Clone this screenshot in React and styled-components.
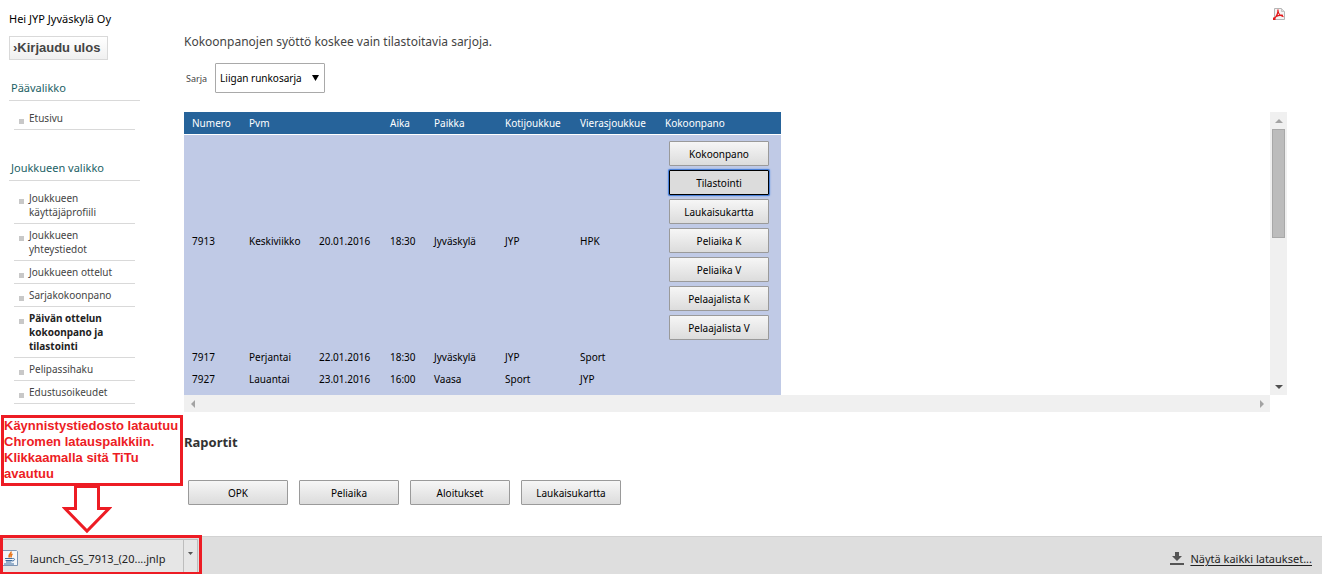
import React from "react";
import styled, { createGlobalStyle } from "styled-components";

const GlobalStyle = createGlobalStyle`
  *, *::before, *::after { box-sizing: border-box; }
  body {
    margin: 0;
    background: #fff;
    color: #000;
    font-family: "Noto Sans", "Open Sans", sans-serif;
    font-size: 10px;
  }
  button, select { font-family: inherit; }
`;

const Page = styled.div`
  display: flex;
  flex-direction: column;
  min-height: 100vh;
`;

const Columns = styled.div`
  display: flex;
  flex: 1;
`;

const Sidebar = styled.aside`
  flex: none;
  width: 184px;
  padding: 11px 44px 0 9px;
`;

const Greeting = styled.p`
  margin: 0 0 9px;
  font-size: 11px;
  line-height: 16px;
  white-space: nowrap;
`;

const LogoutButton = styled.button`
  display: block;
  height: 24px;
  padding: 0 7px 2px 3px;
  border: 1px solid #d9d9d9;
  background: linear-gradient(#fff, #f0f0f0);
  color: #444;
  font: bold 13px "Liberation Sans", sans-serif;
  white-space: nowrap;
`;

const MenuSection = styled.nav`
  margin-top: ${(p) => (p.$first ? 20 : 30)}px;
`;

const MenuTitle = styled.h2`
  margin: 0 0 6px;
  padding: 0 2px 4px;
  border-bottom: 1px solid #d9d9d9;
  color: #1c5f66;
  font-size: 11px;
  font-weight: 400;
  line-height: 16px;
`;

const MenuList = styled.ul`
  margin: 0;
  padding: 0 5px;
  list-style: none;
`;

const MenuItem = styled.li`
  display: flex;
  align-items: flex-start;
  gap: 5px;
  padding: 4px 5px;
  border-bottom: 1px solid #d9d9d9;

  &::before {
    content: "";
    flex: none;
    width: 5px;
    height: 5px;
    margin-top: 8px;
    background: #c8c8c8;
  }
`;

const MenuLink = styled.a`
  color: ${(p) => (p.$active ? "#222" : "#444")};
  font-weight: ${(p) => (p.$active ? 700 : 400)};
  line-height: 14px;
  text-decoration: none;
`;

const Main = styled.main`
  flex: 1;
  min-width: 0;
  padding: 8px 35px 0 0;
`;

const Tools = styled.div`
  display: flex;
  justify-content: flex-end;
  padding: 0 2px;
`;

const PdfLink = styled.a`
  display: block;
  height: 12px;
  svg { display: block; }
`;

const Intro = styled.p`
  margin: 12px 0 11px;
  color: #444;
  font-size: 12px;
  line-height: 20px;
`;

const SeriesRow = styled.div`
  display: flex;
  align-items: center;
  gap: 8px;
  margin-bottom: 19px;
  padding-left: 2px;
`;

const SeriesLabel = styled.label`
  color: #444;
  font-size: 9px;
`;

const SelectWrap = styled.div`
  position: relative;

  svg {
    position: absolute;
    right: 6px;
    top: 12px;
    pointer-events: none;
  }
`;

const SeriesSelect = styled.select`
  display: block;
  appearance: none;
  width: 110px;
  height: 30px;
  padding: 0 4px;
  border: 1px solid #a9a9a9;
  border-radius: 1px;
  background: #fff;
  color: #000;
  font-size: 10px;
`;

const ScrollFrame = styled.div`
  display: grid;
  grid-template-columns: 1fr 17px;
  grid-template-rows: 283px 17px;
`;

const ScrollView = styled.div`
  overflow: hidden;
`;

const ScrollTrack = styled.div`
  display: flex;
  flex-direction: ${(p) => (p.$vertical ? "column" : "row")};
  align-items: center;
  justify-content: space-between;
  background: #f0f0f0;
`;

const ScrollArrow = styled.button`
  display: grid;
  place-items: center;
  flex: none;
  width: 17px;
  height: 17px;
  padding: 0;
  border: 0;
  background: none;
`;

const ScrollThumb = styled.div`
  width: 13px;
  height: 109px;
  margin-bottom: auto;
  border: 1px solid #a8a8a8;
  background: #bcbcbc;
`;

const GameTable = styled.table`
  width: 597px;
  table-layout: fixed;
  border-collapse: separate;
  border-spacing: 0;
`;

const HeadCell = styled.th`
  height: 23px;
  padding: 0 8px;
  border-bottom: 1px solid #fff;
  background: #26639a;
  color: #fff;
  font-weight: 400;
  line-height: 14px;
  text-align: left;
  white-space: nowrap;
`;

const Cell = styled.td`
  height: 22px;
  padding: 0 8px;
  background: #c0cae6;
  line-height: 14px;
  white-space: nowrap;
`;

const ButtonStack = styled.div`
  display: flex;
  flex-direction: column;
  gap: 4px;
  padding: 6px 4px;
`;

const ActionButton = styled.button`
  width: 100px;
  height: 25px;
  padding: 0;
  border: 1px solid #9a9a9a;
  border-radius: 1px;
  background: linear-gradient(#f6f6f6, #dcdcdc);
  color: #000;
  font-size: 10px;
  line-height: 14px;

  &[aria-pressed="true"] {
    border-color: #000;
    background: #dcdcdc;
    box-shadow: 0 0 0 1px #4a80d8, 0 0 2px 1px #6f9de8;
  }
`;

const ReportTitle = styled.h2`
  margin: 20px 0 28px;
  color: #333;
  font-size: 13px;
  font-weight: 700;
  line-height: 20px;
`;

const ReportRow = styled.div`
  display: flex;
  gap: 11px;
  padding: 0 4px 31px;
`;

const DownloadBar = styled.footer`
  position: relative;
  display: flex;
  align-items: center;
  justify-content: space-between;
  flex: none;
  height: 38px;
  padding-right: 10px;
  border-top: 1px solid #d2d2d2;
  background: #dedede;
  color: #222;
  font-size: 11px;
`;

const DownloadItem = styled.div`
  display: flex;
  align-self: stretch;
  margin-top: 2px;
  border-top: 1px solid #bdbdbd;
  background: #e6e6e6;
`;

const FileButton = styled.button`
  display: flex;
  align-items: center;
  gap: 12px;
  width: 183px;
  padding: 2px 0 0 2px;
  border: 0;
  background: none;
  color: #222;
  font-size: 11px;
`;

const FileMenuButton = styled.button`
  display: flex;
  justify-content: center;
  width: 15px;
  padding: 12px 0 0;
  border: 1px solid #bdbdbd;
  border-width: 0 1px;
  background: none;
`;

const AllDownloads = styled.a`
  display: flex;
  align-items: center;
  gap: 6px;
  padding-top: 6px;
  color: #222;
  text-decoration: none;

  span { text-decoration: underline; text-underline-offset: 2px; }
`;

const DownloadOutline = styled.div`
  position: absolute;
  left: 0;
  bottom: 0;
  width: 202px;
  height: 39px;
  border: 3px solid #ed1c24;
  border-bottom-width: 2px;
  pointer-events: none;
`;

const Callout = styled.div`
  position: absolute;
  left: 1px;
  bottom: 39px;
  display: flex;
  flex-direction: column;
  align-items: center;

  svg { display: block; margin-top: -2px; margin-right: 10px; }
`;

const CalloutText = styled.p`
  width: 182px;
  margin: 0;
  padding: 0 0 1px;
  border: 3px solid #ed1c24;
  background: #fff;
  color: #ed1c24;
  font: bold 13px/16px "Liberation Sans", sans-serif;
`;

const mainMenu = [{ label: "Etusivu" }];
const teamMenu = [
  { label: "Joukkueen käyttäjäprofiili" },
  { label: "Joukkueen yhteystiedot" },
  { label: "Joukkueen ottelut" },
  { label: "Sarjakokoonpano" },
  { label: "Päivän ottelun kokoonpano ja tilastointi", active: true },
  { label: "Pelipassihaku" },
  { label: "Edustusoikeudet" },
];

const columnWidths = [57, 70, 71, 44, 71, 75, 85, 124];
const headings = ["Numero", "Pvm", "", "Aika", "Paikka", "Kotijoukkue", "Vierasjoukkue", "Kokoonpano"];
const games = [
  ["7913", "Keskiviikko", "20.01.2016", "18:30", "Jyväskylä", "JYP", "HPK"],
  ["7917", "Perjantai", "22.01.2016", "18:30", "Jyväskylä", "JYP", "Sport"],
  ["7927", "Lauantai", "23.01.2016", "16:00", "Vaasa", "Sport", "JYP"],
  ["", "", "", "", "", "", ""],
];
const gameActions = ["Kokoonpano", "Tilastointi", "Laukaisukartta", "Peliaika K", "Peliaika V", "Pelaajalista K", "Pelaajalista V"];
const reports = ["OPK", "Peliaika", "Aloitukset", "Laukaisukartta"];

const arrowPaths = {
  up: "M0 6L4 2L8 6Z",
  down: "M0 2H8L4 6Z",
  left: "M6 0V8L2 4Z",
  right: "M2 0V8L6 4Z",
};

function Arrow({ dir, color = "#a3a3a3" }) {
  return (
    <svg width="8" height="8" viewBox="0 0 8 8" aria-hidden="true">
      <path d={arrowPaths[dir]} fill={color} />
    </svg>
  );
}

function PdfIcon() {
  return (
    <svg width="12" height="12" viewBox="0 0 12 12" aria-hidden="true">
      <path d="M1.5.5H8.5L11.5 3.5V11.5H1.5Z" fill="#f4f4f4" stroke="#b5b5b5" />
      <path d="M8.5.5V3.5H11.5" fill="#ddd" stroke="#c4c4c4" />
      <path d="M5 1.500C5.200 5 4.500 8 .7 11M5 3C5.500 6 7.500 8 10.500 8.600M2.500 8.800C5 7.300 7.500 7 10 7.300" fill="none" stroke="#e3191c" strokeWidth="1.300" />
      <path d="M0 9.500H2.500V12H0Z" fill="#e3191c" />
    </svg>
  );
}

function JavaFileIcon() {
  return (
    <svg width="16" height="16" viewBox="0 0 16 16" aria-hidden="true">
      <path d="M0 .5H14.500L15.500 1.500V15.500H0" fill="#f3f6fa" stroke="#7d96b4" />
      <path d="M9 1.500C10 3.500 5.500 4.500 7.500 7.500M10.500 4C8.500 5 8.500 5.800 9.300 7.500" fill="none" stroke="#e8751a" strokeWidth="1.500" />
      <path d="M3 8.500H10.500M3.500 10.500H10M4 12H9.500M2 14H12M10.500 8.500C13.500 8 13 11 10 11" fill="none" stroke="#3d6c9e" />
    </svg>
  );
}

function Menu({ title, items, first }) {
  return (
    <MenuSection $first={first} aria-label={title}>
      <MenuTitle>{title}</MenuTitle>
      <MenuList>
        {items.map((item) => (
          <MenuItem key={item.label}>
            <MenuLink href="#" $active={item.active}>{item.label}</MenuLink>
          </MenuItem>
        ))}
      </MenuList>
    </MenuSection>
  );
}

function Games() {
  return (
    <ScrollFrame>
      <ScrollView>
        <GameTable>
          <colgroup>
            {columnWidths.map((w, i) => <col key={i} width={w} />)}
          </colgroup>
          <thead>
            <tr>{headings.map((h, i) => <HeadCell key={i} scope="col">{h}</HeadCell>)}</tr>
          </thead>
          <tbody>
            {games.map((game, row) => (
              <tr key={row}>
                {game.map((value, i) => <Cell key={i}>{value}</Cell>)}
                <Cell>
                  {row === 0 && (
                    <ButtonStack>
                      {gameActions.map((a) => (
                        <ActionButton key={a} type="button" aria-pressed={a === "Tilastointi"}>{a}</ActionButton>
                      ))}
                    </ButtonStack>
                  )}
                </Cell>
              </tr>
            ))}
          </tbody>
        </GameTable>
      </ScrollView>
      <ScrollTrack $vertical>
        <ScrollArrow type="button" aria-label="Ylös"><Arrow dir="up" /></ScrollArrow>
        <ScrollThumb />
        <ScrollArrow type="button" aria-label="Alas"><Arrow dir="down" color="#505050" /></ScrollArrow>
      </ScrollTrack>
      <ScrollTrack>
        <ScrollArrow type="button" aria-label="Vasemmalle"><Arrow dir="left" /></ScrollArrow>
        <ScrollArrow type="button" aria-label="Oikealle"><Arrow dir="right" /></ScrollArrow>
      </ScrollTrack>
    </ScrollFrame>
  );
}

export default function App() {
  return (
    <>
      <GlobalStyle />
      <Page>
        <Columns>
          <Sidebar>
            <Greeting>Hei JYP Jyväskylä Oy</Greeting>
            <LogoutButton type="button">›Kirjaudu ulos</LogoutButton>
            <Menu title="Päävalikko" items={mainMenu} first />
            <Menu title="Joukkueen valikko" items={teamMenu} />
          </Sidebar>
          <Main>
            <Tools>
              <PdfLink href="#" aria-label="PDF"><PdfIcon /></PdfLink>
            </Tools>
            <Intro>Kokoonpanojen syöttö koskee vain tilastoitavia sarjoja.</Intro>
            <SeriesRow>
              <SeriesLabel htmlFor="series">Sarja</SeriesLabel>
              <SelectWrap>
                <SeriesSelect id="series">
                  <option>Liigan runkosarja</option>
                </SeriesSelect>
                <svg width="7" height="6" viewBox="0 0 7 6" aria-hidden="true">
                  <path d="M0 0H7L3.500 6Z" fill="#000" />
                </svg>
              </SelectWrap>
            </SeriesRow>
            <Games />
            <ReportTitle>Raportit</ReportTitle>
            <ReportRow>
              {reports.map((r) => <ActionButton key={r} type="button">{r}</ActionButton>)}
            </ReportRow>
          </Main>
        </Columns>
        <DownloadBar>
          <DownloadItem>
            <FileButton type="button"><JavaFileIcon />launch_GS_7913_(20....jnlp</FileButton>
            <FileMenuButton type="button" aria-label="Latauksen valikko">
              <svg width="5" height="3" viewBox="0 0 5 3" aria-hidden="true"><path d="M0 0H5L2.500 3Z" fill="#555" /></svg>
            </FileMenuButton>
          </DownloadItem>
          <AllDownloads href="#">
            <svg width="14" height="13" viewBox="0 0 14 13" aria-hidden="true">
              <path d="M5 0H9V4H12L7 9L2 4H5ZM0 11H14V13H0Z" fill="#555" />
            </svg>
            <span>Näytä kaikki lataukset...</span>
          </AllDownloads>
          <DownloadOutline />
          <Callout>
            <CalloutText>Käynnistystiedosto latautuu Chromen latauspalkkiin. Klikkaamalla sitä TiTu avautuu</CalloutText>
            <svg width="50" height="51" viewBox="0 0 50 51" aria-hidden="true">
              <path d="M13.500 2.500H36.500V24.500H47L25 47L3 24.500H13.500Z" fill="#fff" stroke="#ed1c24" strokeWidth="3" />
            </svg>
          </Callout>
        </DownloadBar>
      </Page>
    </>
  );
}
